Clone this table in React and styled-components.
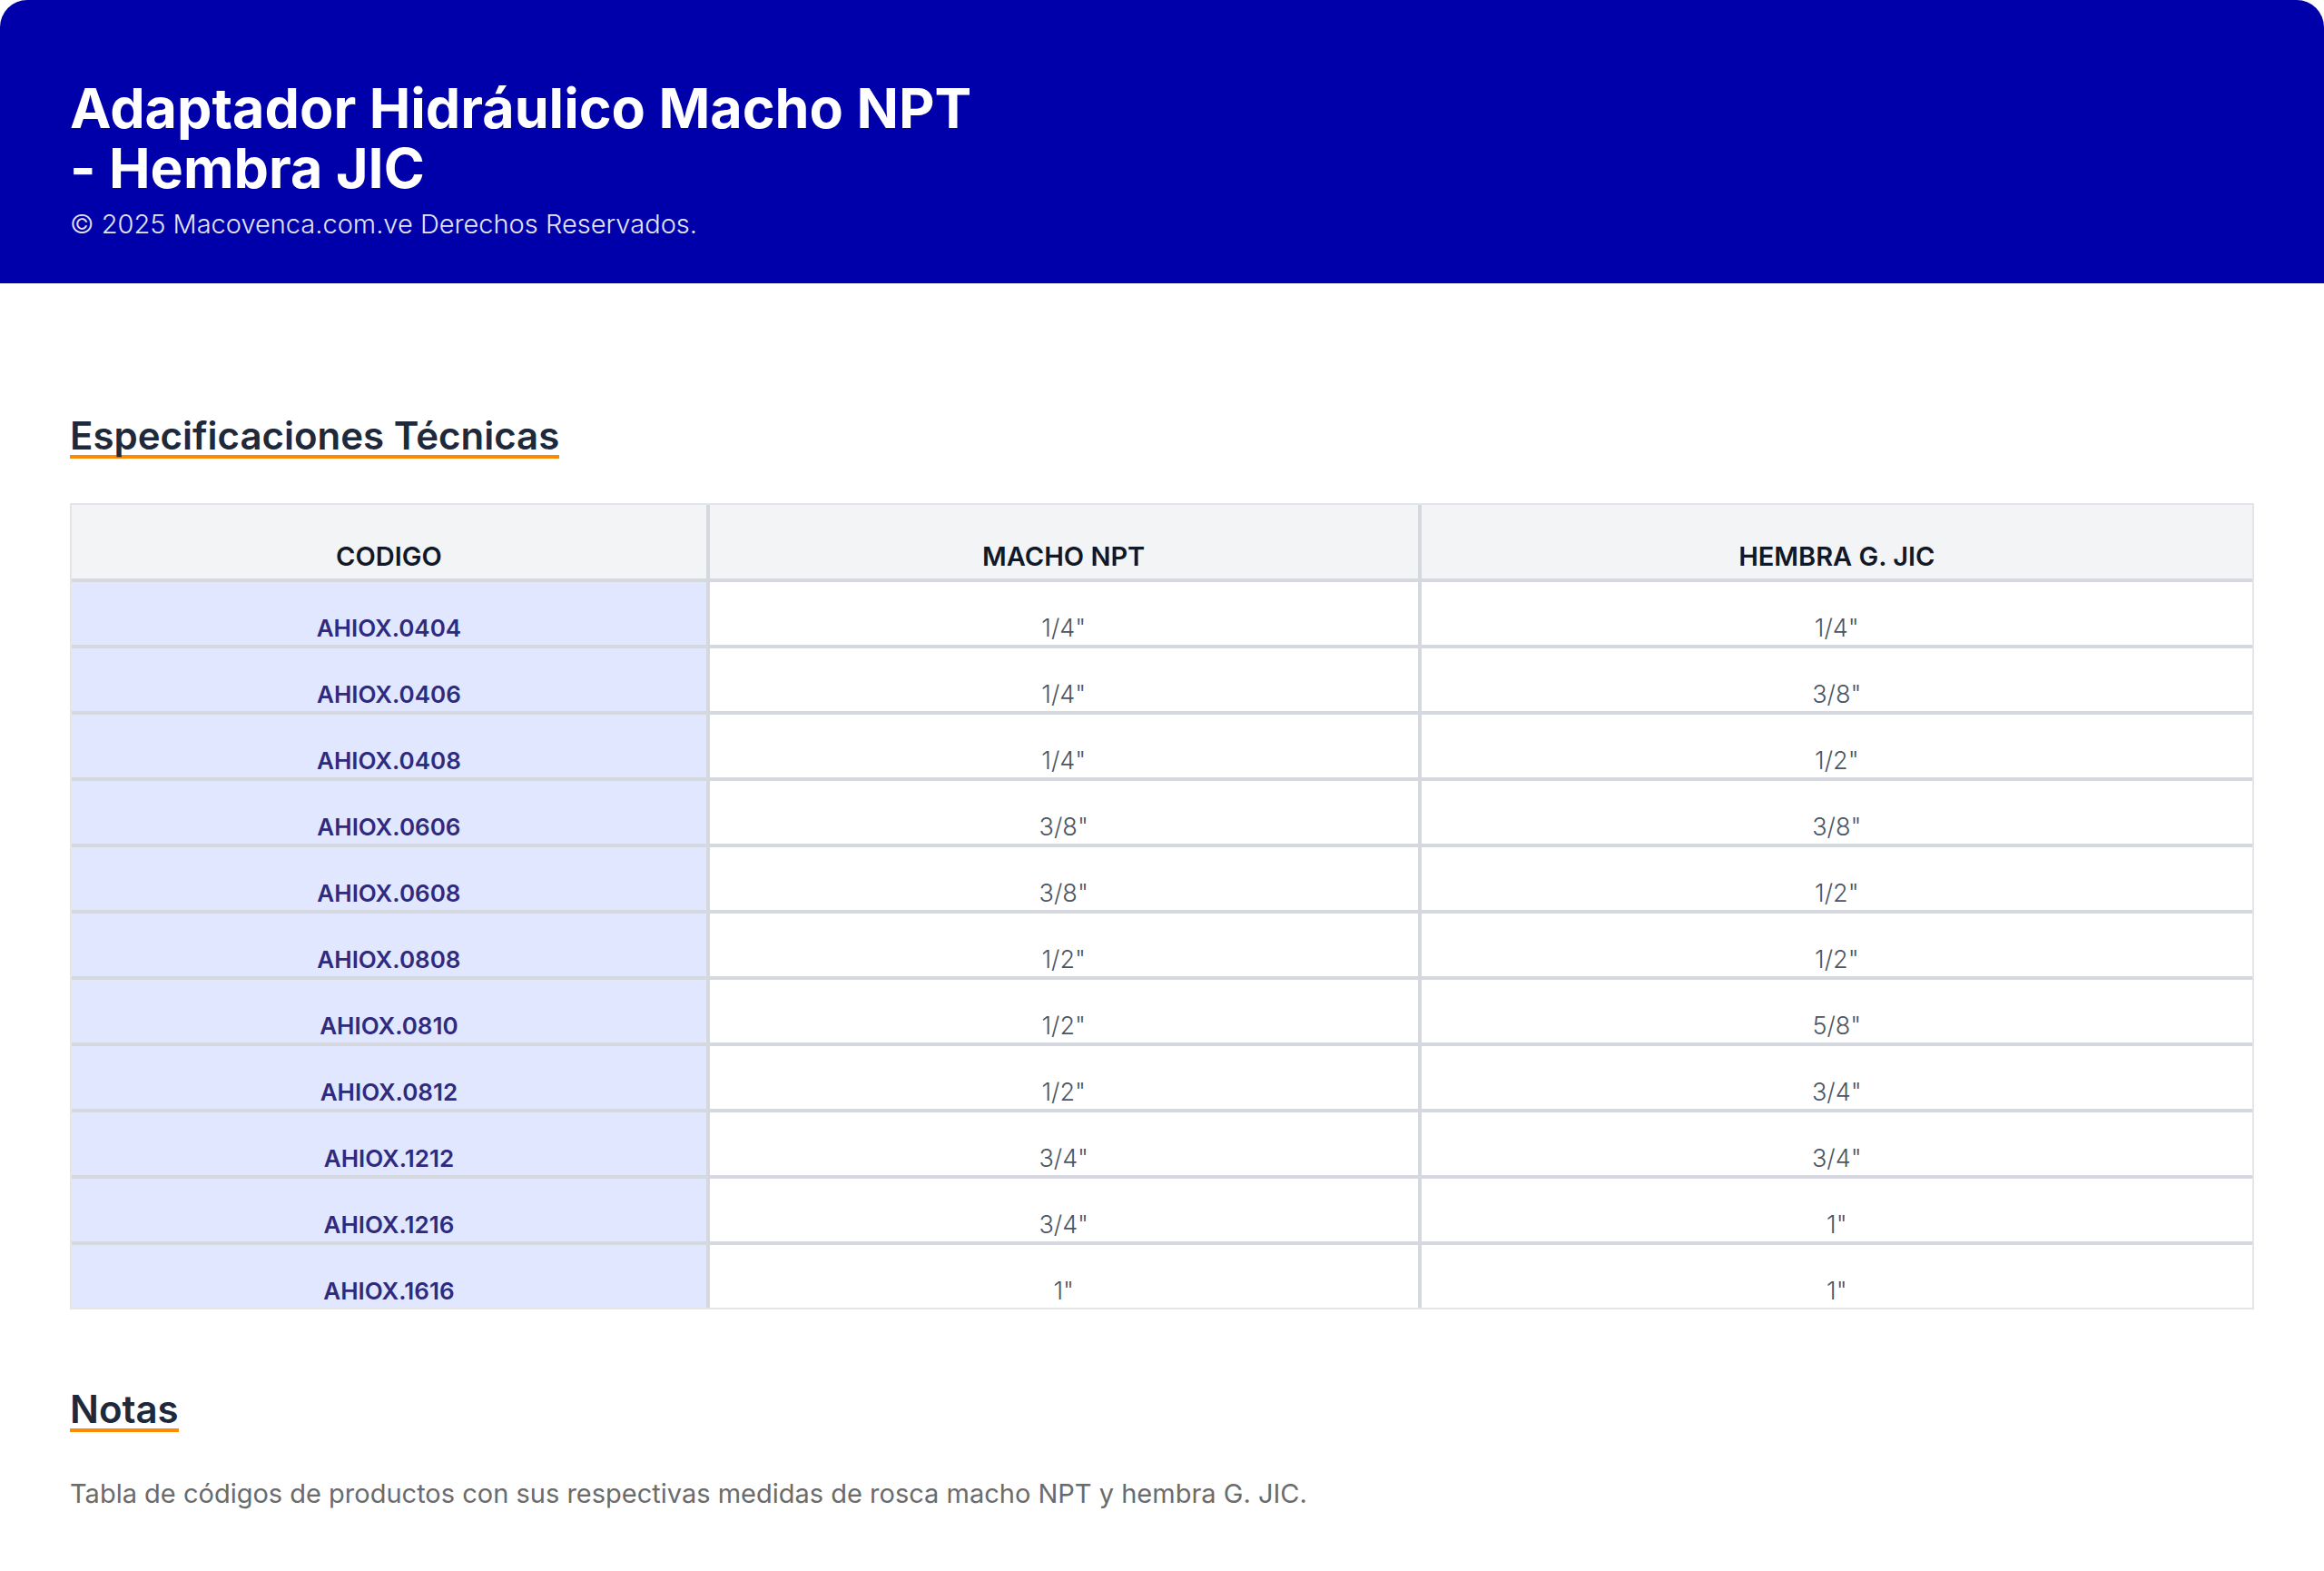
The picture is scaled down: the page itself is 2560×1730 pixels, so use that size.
import React from 'react'
import styled, { createGlobalStyle } from 'styled-components'

const BLUE = '#0000ab'
const ORANGE = '#ff8a00'
const LINE = '#d5d8de'

const GlobalStyle = createGlobalStyle`
  html, body {
    margin: 0;
    padding: 0;
    background: #ffffff;
    font-family: Inter, "Noto Sans", "Liberation Sans", sans-serif;
  }
  * { box-sizing: border-box; }
`

const Page = styled.div`
  width: 2560px;
  min-height: 1730px;
  background: #fff;
`

const Header = styled.header`
  background: ${BLUE};
  border-radius: 30px 30px 0 0;
  padding: 86px 77px 44px;
  color: #fff;
`

const Title = styled.h1`
  margin: 0;
  max-width: 1010px;
  font-size: 61px;
  line-height: 66px;
  font-weight: 700;
`

const Copy = styled.p`
  margin: 8px 0 0;
  font-size: 29px;
  line-height: 42px;
  font-weight: 300;
  color: #e4e4f7;
`

const Main = styled.main`
  padding: 147px 77px 60px;
`

const SectionTitle = styled.h2`
  display: inline-block;
  margin: 0;
  font-size: 42px;
  line-height: 1;
  font-weight: 600;
  color: #1e293b;
  border-bottom: 4px solid ${ORANGE};
`

const Table = styled.table`
  width: 100%;
  margin: 49px 0 89px;
  border-collapse: separate;
  border-spacing: 0;
  table-layout: fixed;
  border: 2px solid #e3e5e9;
`

const Th = styled.th`
  background: #f3f4f6;
  padding: 37px 16px 4px;
  font-size: 29px;
  line-height: 40px;
  font-weight: 600;
  color: #111827;
  text-align: center;
  border-bottom: 4px solid ${LINE};
  border-right: ${p => (p.$last ? 'none' : `4px solid ${LINE}`)};
`

const Td = styled.td`
  padding: 32px 16px 0;
  font-size: ${p => (p.$code ? '26px' : '27px')};
  line-height: 37px;
  text-align: center;
  background: ${p => (p.$code ? '#e0e7ff' : '#fff')};
  color: ${p => (p.$code ? '#2f2a7e' : '#4b5563')};
  font-weight: ${p => (p.$code ? 600 : 300)};
  border-bottom: ${p => (p.$lastRow ? 'none' : `4px solid ${LINE}`)};
  border-right: ${p => (p.$last ? 'none' : `4px solid ${LINE}`)};
`

const Note = styled.p`
  margin: 46px 0 0;
  font-size: 29px;
  line-height: 1.5;
  font-weight: 400;
  color: #6b6b6b;
`

const rows = [
  ['AHIOX.0404', '1/4"', '1/4"'],
  ['AHIOX.0406', '1/4"', '3/8"'],
  ['AHIOX.0408', '1/4"', '1/2"'],
  ['AHIOX.0606', '3/8"', '3/8"'],
  ['AHIOX.0608', '3/8"', '1/2"'],
  ['AHIOX.0808', '1/2"', '1/2"'],
  ['AHIOX.0810', '1/2"', '5/8"'],
  ['AHIOX.0812', '1/2"', '3/4"'],
  ['AHIOX.1212', '3/4"', '3/4"'],
  ['AHIOX.1216', '3/4"', '1"'],
  ['AHIOX.1616', '1"', '1"'],
]

const App = () => {
  return (
    <Page>
      <GlobalStyle />
      <Header>
        <Title>Adaptador Hidráulico Macho NPT - Hembra JIC</Title>
        <Copy>© 2025 Macovenca.com.ve Derechos Reservados.</Copy>
      </Header>

      <Main>
        <SectionTitle>Especificaciones Técnicas</SectionTitle>
        <Table>
          <colgroup>
            <col style={{ width: '29.26%' }} />
            <col style={{ width: '32.63%' }} />
            <col style={{ width: '38.11%' }} />
          </colgroup>
          <thead>
            <tr>
              <Th>CODIGO</Th>
              <Th>MACHO NPT</Th>
              <Th $last>HEMBRA G. JIC</Th>
            </tr>
          </thead>
          <tbody>
            {rows.map(([code, npt, jic], i) => {
              const lastRow = i === rows.length - 1
              return (
                <tr key={code}>
                  <Td $code $lastRow={lastRow}>{code}</Td>
                  <Td $lastRow={lastRow}>{npt}</Td>
                  <Td $last $lastRow={lastRow}>{jic}</Td>
                </tr>
              )
            })}
          </tbody>
        </Table>

        <SectionTitle>Notas</SectionTitle>
        <Note>Tabla de códigos de productos con sus respectivas medidas de rosca macho NPT y hembra G. JIC.</Note>
      </Main>
    </Page>
  )
}

export default App
